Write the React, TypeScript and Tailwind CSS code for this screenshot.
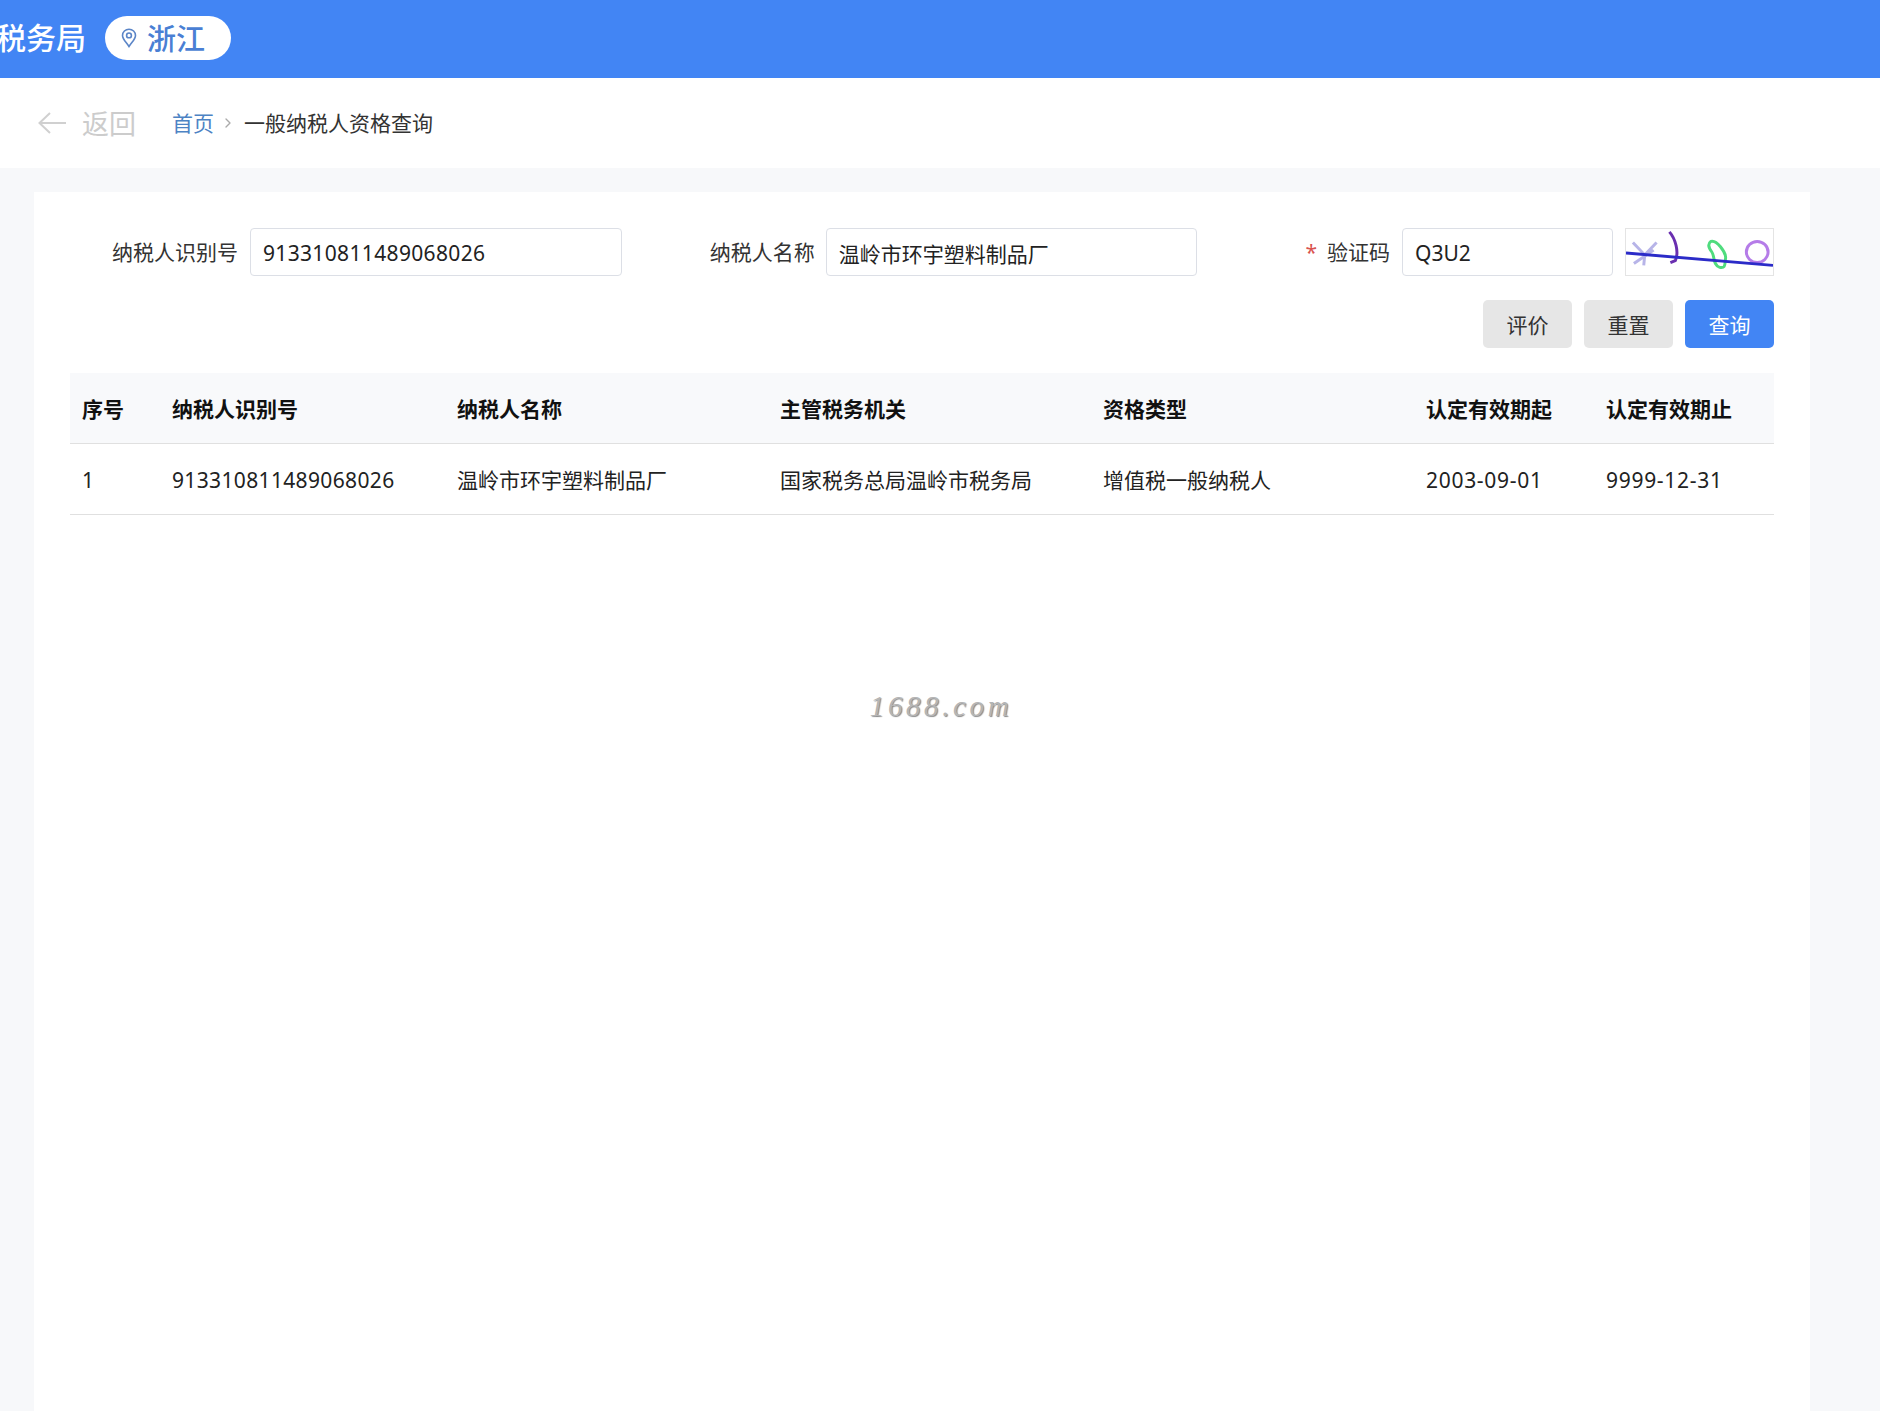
import React from "react";
import { ChevronRight } from "lucide-react";

const FONT = "font-['Noto_Sans','Noto_Sans_CJK_SC',sans-serif]";
const cols = ["w-[90px]", "w-[285px]", "w-[323px]", "w-[323px]", "w-[323px]", "w-[180px]", "w-[180px]"];
const heads = ["序号", "纳税人识别号", "纳税人名称", "主管税务机关", "资格类型", "认定有效期起", "认定有效期止"];
const row = ["1", "913310811489068026", "温岭市环宇塑料制品厂", "国家税务总局温岭市税务局", "增值税一般纳税人", "2003-09-01", "9999-12-31"];
const cellTrack = ["", "tracking-[0.35px]", "", "", "", "tracking-[0.7px]", "tracking-[0.7px]"];

function Field({ value, className }: { value: string; className: string }) {
  return (
    <input
      readOnly
      value={value}
      className={`h-[48px] rounded-[4px] border border-[#dcdfe6] bg-white px-[12px] pt-[2px] text-[21px] text-[#222] outline-none ${className}`}
    />
  );
}

function Captcha() {
  return (
    <svg viewBox="0 0 149 48" preserveAspectRatio="none" className="h-[48px] w-[149px] border border-[#e4e4e4] bg-white">
      <path d="M7 14 L19 27 M31 14 L19 27 L18 38 M8 36 L28 22" stroke="#b7b4e8" strokeWidth="3" fill="none" />
      <path d="M44 3 C50 10 54 24 50 33 L45 35" stroke="#6a2fb0" strokeWidth="3" fill="none" />
      <path d="M86 13 C92 11 101 24 101 30 C100 38 101 41 95 40 C88 38 90 28 87 24 C84 20 82 16 86 13 Z" stroke="#4fdc7e" strokeWidth="3" fill="none" />
      <circle cx="133" cy="24" r="11" stroke="#b57ce8" strokeWidth="3" fill="none" />
      <path d="M0 25 L149 38" stroke="#2b2bc8" strokeWidth="3" fill="none" />
    </svg>
  );
}

function Pin() {
  return (
    <svg viewBox="0 0 16 20" className="h-[20px] w-[16px]" fill="none" stroke="#5b85c7" strokeWidth="1.6">
      <path d="M8 18.5 C5 14 1.5 11 1.5 7.4 A6.5 6.2 0 0 1 14.5 7.4 C14.5 11 11 14 8 18.5 Z" />
      <circle cx="8" cy="7.4" r="2.4" />
    </svg>
  );
}

export default function App() {
  return (
    <div className={`flex h-[1411px] flex-col overflow-hidden bg-[#f7f8fa] ${FONT}`}>
      <header className="flex h-[78px] shrink-0 items-center bg-[#4285f4]">
        <span className="mb-[2px] ml-[-4px] text-[30px] font-medium leading-none text-white">税务局</span>
        <div className="mb-[2px] ml-[19px] flex h-[44px] w-[126px] items-center rounded-full bg-white pl-[16px]">
          <Pin />
          <span className="ml-[10px] text-[29px] font-medium leading-none text-[#4a7fd4]">浙江</span>
        </div>
      </header>

      <nav className="flex h-[90px] shrink-0 items-center bg-white pl-[38px]">
        <svg viewBox="0 0 28 24" className="h-[24px] w-[28px]" fill="none" stroke="#d0d0d0" strokeWidth="2">
          <path d="M1.5 12 H28 M12 2 L1.5 12 L12 22" />
        </svg>
        <span className="ml-[16px] text-[27px] leading-none text-[#cccccc]">返回</span>
        <span className="ml-[36px] text-[21px] leading-none text-[#4d83c4]">首页</span>
        <ChevronRight className="ml-[6px] h-[16px] w-[16px] text-[#aaaaaa]" strokeWidth={2} />
        <span className="ml-[8px] text-[21px] leading-none text-[#333333]">一般纳税人资格查询</span>
      </nav>

      <main className="ml-[34px] mr-[70px] mt-[24px] flex-1 bg-white px-[36px] pt-[36px]">
        <div className="flex items-center">
          <label className="w-[180px] pr-[12px] pt-[2px] text-right text-[21px] text-[#333]">纳税人识别号</label>
          <Field value="913310811489068026" className="w-[372px] tracking-[0.35px]" />
          <label className="ml-[86px] w-[118px] pr-[11px] pt-[2px] text-right text-[21px] text-[#333]">纳税人名称</label>
          <Field value="温岭市环宇塑料制品厂" className="w-[372px]" />
          <span className="ml-[108px] text-[21px] leading-none text-[#d9534f]">*</span>
          <label className="ml-[10px] w-[75px] pt-[2px] text-left text-[21px] text-[#333]">验证码</label>
          <Field value="Q3U2" className="w-[211px]" />
          <div className="ml-[12px]">
            <Captcha />
          </div>
        </div>

        <div className="mt-[24px] flex justify-end gap-[12px]">
          <button className="h-[48px] w-[89px] rounded-[5px] bg-[#e6e6e6] pt-[4px] text-[21px] text-[#333]">评价</button>
          <button className="h-[48px] w-[89px] rounded-[5px] bg-[#e6e6e6] pt-[4px] text-[21px] text-[#333]">重置</button>
          <button className="h-[48px] w-[89px] rounded-[5px] bg-[#4285f4] pt-[4px] text-[21px] text-white">查询</button>
        </div>

        <table className="mt-[25px] w-[1704px] table-fixed border-collapse text-left text-[21px]">
          <colgroup>
            {cols.map((c, i) => (
              <col key={i} className={c} />
            ))}
          </colgroup>
          <thead>
            <tr className="h-[70px] border-b border-[#e0e0e0] bg-[#f8f9fb]">
              {heads.map((h) => (
                <th key={h} className="px-[12px] pt-[4px] font-bold text-[#111]">
                  {h}
                </th>
              ))}
            </tr>
          </thead>
          <tbody>
            <tr className="h-[71px] border-b border-[#e0e0e0]">
              {row.map((c, i) => (
                <td key={i} className={`px-[12px] pt-[4px] text-[#222] ${cellTrack[i]}`}>
                  {c}
                </td>
              ))}
            </tr>
          </tbody>
        </table>

        <div className="mt-[177px] flex justify-center pl-[38px]">
          <span className="font-['Liberation_Serif',serif] text-[29px] italic leading-none tracking-[3.6px] text-[#b5b5b5] [text-shadow:1px_1px_1px_#888]">
            1688.com
          </span>
        </div>
      </main>
    </div>
  );
}
